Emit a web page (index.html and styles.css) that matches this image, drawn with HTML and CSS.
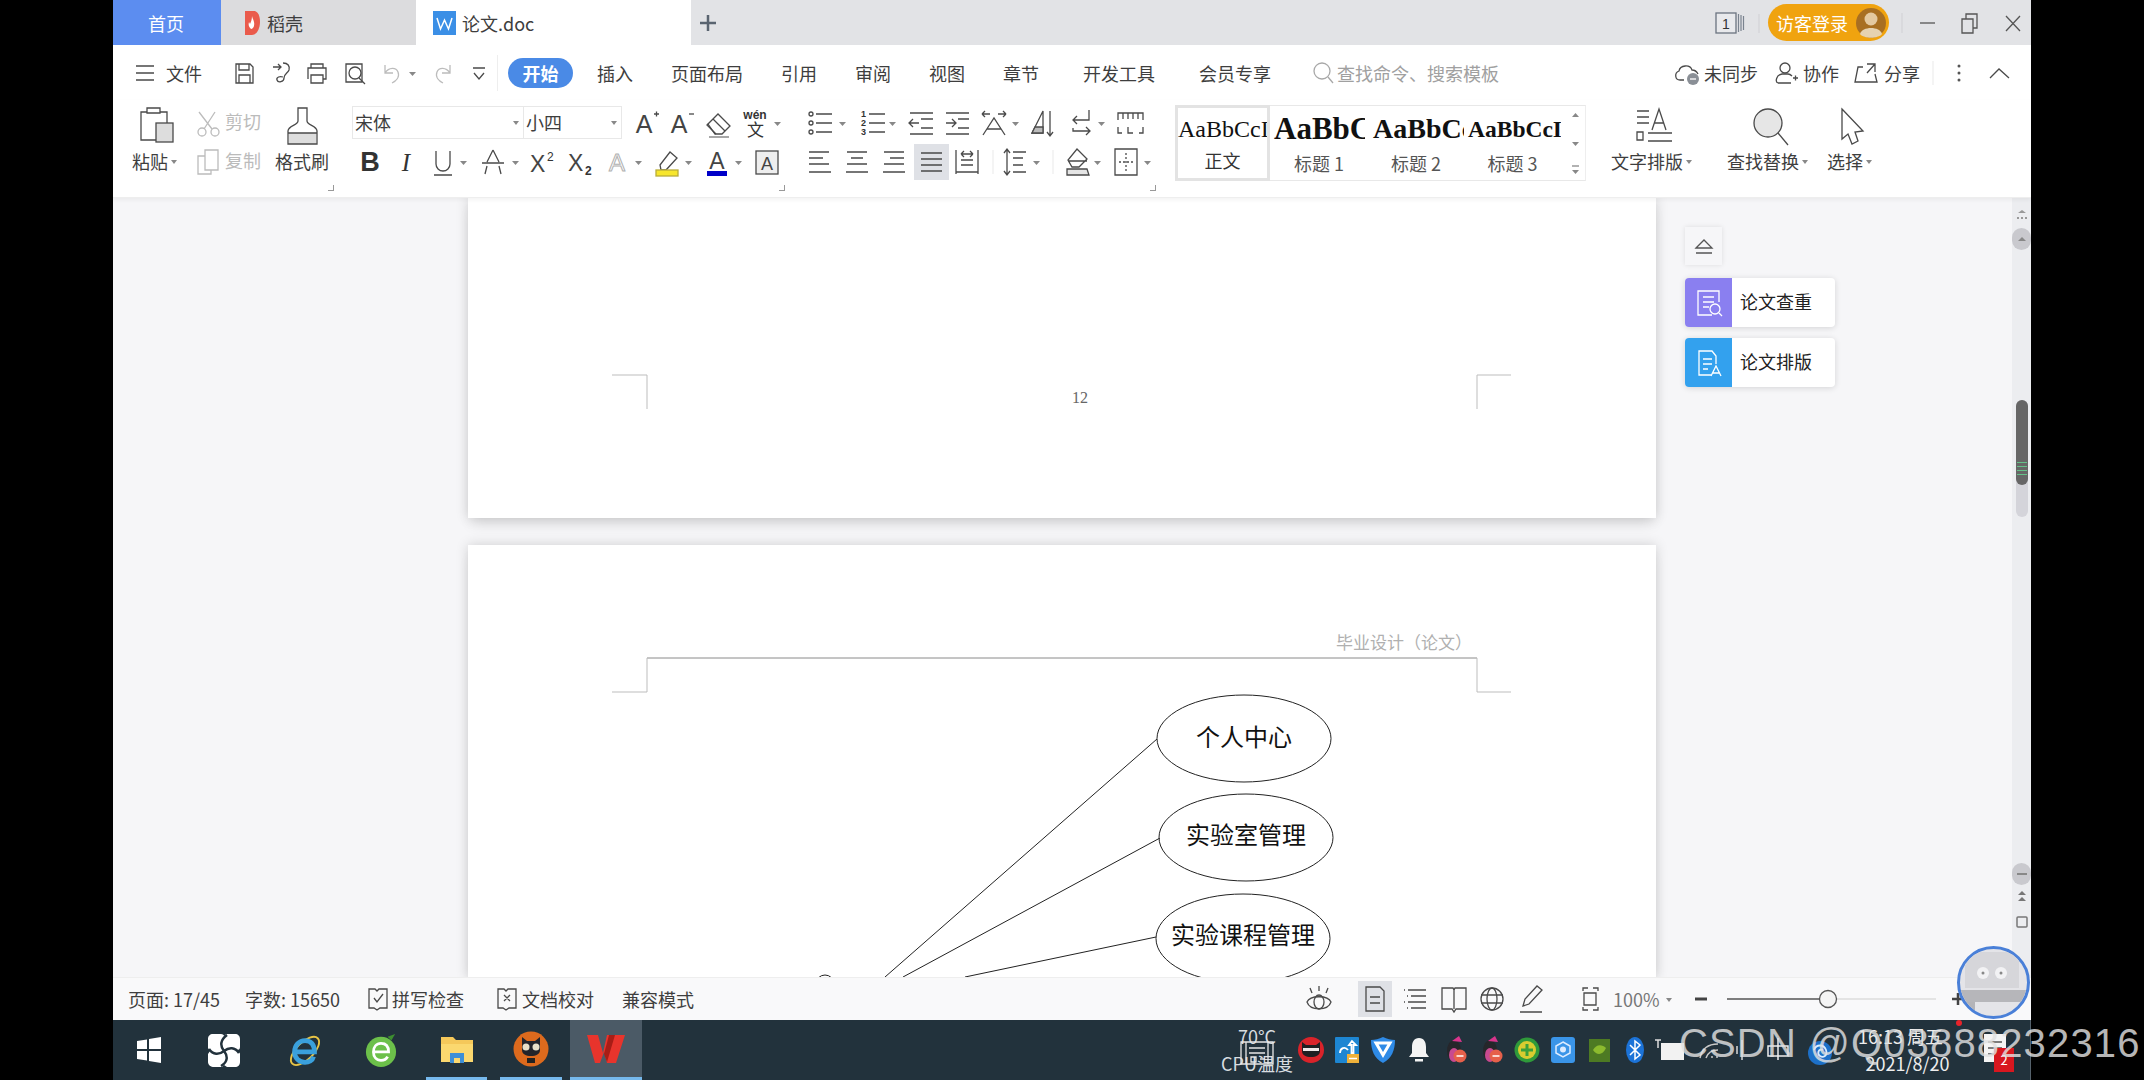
FILE: index.html
```html
<!DOCTYPE html>
<html lang="zh-CN">
<head>
<meta charset="utf-8">
<title>论文.doc</title>
<link rel="stylesheet" href="styles.css">
</head>
<body>
<div class="app">

  <header class="titlebar">
    <div class="tab tab-home">首页</div>
    <div class="tab tab-dk">
      <svg width="18" height="26" viewBox="0 0 18 26"><path d="M2 1h9c4 0 6 5 6 11s-3 13-8 13H2z" fill="#ea5b4c"/><path d="M9 6c1 4 3 6 2 10-1 3-3 3-3 3-2-2-3-4-2-7l1 2c1-2 2-5 2-8z" fill="#fff"/></svg>
      <span>稻壳</span>
    </div>
    <div class="tab tab-doc">
      <svg width="23" height="24" viewBox="0 0 23 24"><rect width="23" height="24" fill="#3b8fe6"/><path d="M4 7l3.500 11L11.500 9l4 9L19 7" fill="none" stroke="#fff" stroke-width="1.500"/></svg>
      <span>论文.doc</span>
    </div>
    <svg class="ic" width="34" height="34" viewBox="0 0 34 34"><path d="M17 9v16M9 17h16" stroke="#5a6470" stroke-width="2.500"/></svg>
    <div class="title-right">
      <svg class="ic" width="68" height="30" viewBox="0 0 68 30"><rect x="16" y="5" width="20" height="20" fill="#e8e9ec" stroke="#6a7380" stroke-width="1.300"/><text class="t" x="26" y="21" text-anchor="middle" font-size="14">1</text><path d="M38.500 6v18M41 7v16M43.500 8v14" stroke="#7a838f" stroke-width="1.200"/><path d="M59 6v19" stroke="#d4d5d9"/></svg>
      <div class="login">
        <span>访客登录</span>
        <svg width="32" height="32" viewBox="0 0 32 32"><circle cx="16" cy="16" r="15" fill="#a86f22"/><circle cx="16" cy="12" r="6.500" fill="#e4c9a0"/><path d="M5 27c2-8 20-8 22 0-4 5-18 5-22 0z" fill="#e6d2b0"/></svg>
      </div>
      <svg class="ic" width="59" height="30" viewBox="0 0 59 30"><path d="M13 5v20" stroke="#d4d5d9"/><path d="M31 15h15" stroke="#555"/></svg>
      <svg class="ic" width="42" height="30" viewBox="0 0 42 30"><path d="M14 11h11v14H14zM18 11V6h11v14h-4" stroke="#555"/></svg>
      <svg class="ic" width="38" height="30" viewBox="0 0 38 30"><path d="M16 8l14 15M30 8L16 23" stroke="#555"/></svg>
    </div>
  </header>

  <nav class="menubar">
    <svg class="ic" width="49" height="30" viewBox="0 0 49 30"><path d="M23 8h18M23 15h18M23 22h18"/></svg>
    <span class="menu-file">文件</span>
    <svg class="ic" width="44" height="30" viewBox="0 0 44 30"><path d="M18 6h14l3 3v16H18zM21 6v6h10V6M21 25v-8h11v8"/></svg>
    <svg class="ic" width="37" height="30" viewBox="0 0 37 30"><path d="M11 9h8M16 6l3 3-3 3M21 5c5 0 7 3 6 7-1 3-5 4-5 8 0 4-6 5-7 2s3-4 6-3"/></svg>
    <svg class="ic" width="37" height="30" viewBox="0 0 37 30"><path d="M12 10V6h12v4M9 21V10h18v11h-3M12 17h12v8H12z"/></svg>
    <svg class="ic" width="38" height="30" viewBox="0 0 38 30"><path d="M10 6h16v18H10z"/><circle cx="19" cy="15" r="6"/><path d="M23 20l6 6"/></svg>
    <svg class="ic ic-off" width="50" height="30" viewBox="0 0 50 30"><path d="M11 7v8h8M11 15c4-6 11-6 13-1s-2 9-6 11"/><path class="c" d="M35 14h7l-3.500 4z"/></svg>
    <svg class="ic ic-off" width="36" height="30" viewBox="0 0 36 30"><path d="M26 7v8h-8M26 15c-4-6-11-6-13-1s2 9 6 11"/></svg>
    <svg class="ic" width="37" height="30" viewBox="0 0 37 30"><path d="M13 10h12M14 15l5 6 5-6"/></svg>
    <span class="menu-sep"></span>
    <span class="pill">开始</span>
    <div class="tabs">
      <span>插入</span><span>页面布局</span><span>引用</span><span>审阅</span><span>视图</span><span>章节</span>
      <span class="tab-far">开发工具</span><span class="tab-far">会员专享</span>
    </div>
    <div class="search">
      <svg class="ic ic-soft" width="25" height="30" viewBox="0 0 25 30"><circle cx="10" cy="13" r="8"/><path d="M16 19l5 6"/></svg>
      <span>查找命令、搜索模板</span>
    </div>
    <div class="menu-right">
      <svg class="ic" width="32" height="30" viewBox="0 0 32 30"><path d="M12 22H8c-5 0-6-7-1-9 1-6 11-7 13-1 3 0 5 2 6 4"/><circle cx="21" cy="21" r="6" fill="#8a8f96" stroke="none"/><path d="M18 21h6" stroke="#fff"/></svg>
      <span class="mr-54">未同步</span>
      <svg class="ic" width="45" height="30" viewBox="0 0 45 30"><circle cx="27" cy="10" r="5"/><path d="M20 25c-3-1-2-8 4-9h6c2 0 3 1 4 2M20 25h13M35 20h5M37.500 17.500v5"/></svg>
      <span class="mr-36">协作</span>
      <svg class="ic" width="45" height="30" viewBox="0 0 45 30"><path d="M24 9h-5l-3 15h22l-2-8M28 6h8v8M36 6l-8 9"/></svg>
      <span class="mr-36">分享</span>
      <svg class="ic" width="58" height="30" viewBox="0 0 58 30"><path d="M13 3v24" stroke="#eee"/><circle cx="39" cy="8" r="1.500" fill="#555" stroke="none"/><circle cx="39" cy="15" r="1.500" fill="#555" stroke="none"/><circle cx="39" cy="22" r="1.500" fill="#555" stroke="none"/></svg>
      <svg class="ic" width="49" height="30" viewBox="0 0 49 30"><path d="M12 20l9-9 10 9"/></svg>
    </div>
  </nav>

  <section class="ribbon">
    <div class="group g-clip">
      <div class="bigbtn b-paste">
        <svg class="ic" width="64" height="40" viewBox="0 0 64 40"><path d="M9 6h26v28H9z"/><path d="M15 2h13v5H15z" fill="#fff"/><rect x="24" y="17" width="17" height="19" fill="#ddd"/></svg>
        <span class="label">粘贴<i class="car"></i></span>
      </div>
      <div class="clipcol">
        <div class="cliprow"><svg class="ic ic-off" width="29" height="36" viewBox="0 0 29 36"><path d="M3 7l13 17M19 7L8 24"/><circle cx="6" cy="27" r="4"/><circle cx="19" cy="27" r="4"/></svg><span>剪切</span></div>
        <div class="cliprow"><svg class="ic ic-off" width="29" height="36" viewBox="0 0 29 36"><path d="M9 6h13v20H9z"/><path d="M9 12H2v18h13v-4" /></svg><span>复制</span></div>
      </div>
      <div class="bigbtn b-brush">
        <svg class="ic" width="54" height="40" viewBox="0 0 54 40"><rect x="14" y="27" width="27" height="11" fill="#ddd" stroke="none"/><path d="M23 2h9v13c0 4 10 5 10 10v13H13V25c0-5 10-6 10-10zM13 27h29"/></svg>
        <span class="label">格式刷</span>
      </div>
      <i class="mark"></i>
    </div>

    <div class="group g-font">
      <div class="row">
        <div class="fontsel fs-name"><span>宋体</span><i class="car"></i></div>
        <div class="fontsel fs-size"><span>小四</span><i class="car"></i></div>
        <svg class="ic" width="40" height="36" viewBox="0 0 40 36"><text class="t thin" x="22" y="28" text-anchor="middle" font-size="25">A</text><path d="M32 9h5M34.500 6.500v5"/></svg>
        <svg class="ic" width="36" height="36" viewBox="0 0 36 36"><text class="t thin" x="17" y="28" text-anchor="middle" font-size="25">A</text><path d="M27 9h5"/></svg>
        <svg class="ic" width="44" height="36" viewBox="0 0 44 36"><path d="M10 19L20 9l12 12-8 8h-7z"/><path d="M10 19l-1 1 9 9M15 14l12 12" /><path d="M11 32h20" stroke="#777"/></svg>
        <svg class="ic" width="44" height="36" viewBox="0 0 44 36"><text class="t" x="13" y="14" text-anchor="middle" font-size="12" font-weight="700">wén</text><text class="t" x="13" y="31" text-anchor="middle" font-size="17">文</text><path class="c" d="M32 17h7l-3.500 4z"/></svg>
      </div>
      <div class="row">
        <svg class="ic" width="36" height="36" viewBox="0 0 36 36"><text class="t" x="18" y="27" text-anchor="middle" font-size="27" font-weight="700">B</text></svg>
        <svg class="ic" width="36" height="36" viewBox="0 0 36 36"><text class="t serif" x="18" y="27" text-anchor="middle" font-size="25" font-style="italic">I</text></svg>
        <svg class="ic" width="48" height="36" viewBox="0 0 48 36"><path d="M12 7v13a7 7 0 0 0 14 0V7M10 31h18"/><path class="c" d="M36 17h7l-3.500 4z"/></svg>
        <svg class="ic" width="54" height="36" viewBox="0 0 54 36"><path d="M21 6l-6 12M21 6l6 12M10 19h22M15 22l-2 8M27 22l2 8"/><path class="c" d="M40 17h7l-3.500 4z"/></svg>
        <svg class="ic" width="36" height="36" viewBox="0 0 36 36"><text class="t thin" x="4" y="28" font-size="23">X</text><text class="t" x="21" y="17" font-size="12">2</text></svg>
        <svg class="ic" width="36" height="36" viewBox="0 0 36 36"><text class="t thin" x="6" y="27" font-size="23">X</text><text class="t" x="23" y="31" font-size="12" font-weight="700">2</text></svg>
        <svg class="ic" width="52" height="36" viewBox="0 0 52 36"><text class="t ghost" x="19" y="27" text-anchor="middle" font-size="24">A</text><path class="c" d="M37 17h7l-3.500 4z"/></svg>
        <svg class="ic" width="50" height="36" viewBox="0 0 50 36"><path d="M10 21L20 8l7 6-11 12h-5z"/><rect x="6" y="26" width="22" height="6" fill="#f7e62d" stroke="#b9ad3a"/><path class="c" d="M35 17h7l-3.500 4z"/></svg>
        <svg class="ic" width="50" height="36" viewBox="0 0 50 36"><text class="t thin" x="17" y="25" text-anchor="middle" font-size="23">A</text><rect x="7" y="27" width="20" height="5" fill="#0000c8" stroke="none"/><path class="c" d="M35 17h7l-3.500 4z"/></svg>
        <svg class="ic" width="36" height="36" viewBox="0 0 36 36"><rect x="6" y="7" width="22" height="23" fill="#eee"/><text class="t thin" x="17" y="26" text-anchor="middle" font-size="18">A</text></svg>
      </div>
      <i class="mark"></i>
    </div>

    <div class="group g-para">
      <div class="row">
        <svg class="ic" width="58" height="36" viewBox="0 0 58 36"><circle cx="17" cy="9" r="2"/><circle cx="17" cy="18" r="2"/><circle cx="17" cy="27" r="2"/><path d="M22 9h16M22 18h16M22 27h16"/><path class="c" d="M45 17h7l-3.500 4z"/></svg>
        <svg class="ic" width="50" height="36" viewBox="0 0 50 36"><text class="t" x="9" y="12" font-size="9" font-weight="700">1</text><text class="t" x="9" y="21" font-size="9" font-weight="700">2</text><text class="t" x="9" y="30" font-size="9" font-weight="700">3</text><path d="M17 9h16M17 18h16M17 27h16"/><path class="c" d="M37 17h7l-3.500 4z"/></svg>
        <svg class="ic" width="38" height="36" viewBox="0 0 38 36"><path d="M8 8h23M19 14h12M19 23h12M8 29h23M17 18H7M11 14l-4 4 4 4"/></svg>
        <svg class="ic" width="36" height="36" viewBox="0 0 36 36"><path d="M6 8h23M18 14h11M18 23h11M6 29h23M6 18h10M12 14l4 4-4 4"/></svg>
        <svg class="ic" width="48" height="36" viewBox="0 0 48 36"><path d="M7 30l11-17 11 17M11 24h14M6 9h8M6 9l3-3M6 9l3 3M30 9h-8M30 9l-3-3M30 9l-3 3"/><path class="c" d="M36 17h7l-3.500 4z"/></svg>
        <svg class="ic" width="38" height="36" viewBox="0 0 38 36"><path d="M8 28L19 6v22z"/><path d="M11 22h8v6H8z" fill="#bbb"/><path d="M26 6v25M23 27l3 4 3-4"/></svg>
        <svg class="ic" width="48" height="36" viewBox="0 0 48 36"><path d="M27 5v10H11M15 11l-4 4 4 4M11 23v3h17M24 22l4 4-4 4"/><path class="c" d="M36 17h7l-3.500 4z"/></svg>
        <svg class="ic" width="42" height="36" viewBox="0 0 42 36"><path d="M8 15V8h25v7M13 8v6M18 8v6M23 8v6M28 8v6M8 22v6h4M33 22v6h-4M18 22v6h5"/></svg>
      </div>
      <div class="row">
        <svg class="ic" width="44" height="36" viewBox="0 0 44 36"><path d="M15 8h20M15 14h14M15 20h20M15 28h22"/></svg>
        <svg class="ic" width="38" height="36" viewBox="0 0 38 36"><path d="M9 8h20M13 14h12M9 20h20M8 28h22"/></svg>
        <svg class="ic" width="38" height="36" viewBox="0 0 38 36"><path d="M8 8h20M14 14h14M8 20h20M7 28h22"/></svg>
        <span class="on"><svg class="ic" width="35" height="36" viewBox="0 0 35 36"><path d="M7 9h21M7 15h21M7 21h21M7 27h21"/></svg></span>
        <svg class="ic" width="36" height="36" viewBox="0 0 36 36"><path d="M7 6v24M29 6v24M7 28h22M12 21h12M12 10h12M12 10l3-3M12 10l3 3M24 10l-3-3M24 10l-3 3M12 16h12"/></svg>
        <svg class="ic" width="16" height="36" viewBox="0 0 16 36"><path d="M8 6v24" stroke="#eee"/></svg>
        <svg class="ic" width="44" height="36" viewBox="0 0 44 36"><path d="M6 6v24M3 9l3-4 3 4M3 27l3 4 3-4M12 8h13M12 14h10M12 21h10M12 28h13"/><path class="c" d="M32 17h7l-3.500 4z"/></svg>
        <svg class="ic" width="16" height="36" viewBox="0 0 16 36"><path d="M8 6v24" stroke="#eee"/></svg>
        <svg class="ic" width="47" height="36" viewBox="0 0 47 36"><path d="M16 5l10 10-8 8H11l-4-7zM7 17h19"/><path d="M6 25h20l2 6H6z" fill="#e5e5e5"/><path class="c" d="M33 17h7l-3.500 4z"/></svg>
        <svg class="ic" width="48" height="36" viewBox="0 0 48 36"><path d="M7 5h22v26H7z"/><path d="M18 9v18M11 18h14" stroke-dasharray="2 2"/><path class="c" d="M36 17h7l-3.500 4z"/></svg>
      </div>
      <i class="mark"></i>
    </div>

    <div class="gallery">
      <div class="style sel"><div class="sample s0">AaBbCcI</div><div class="cap">正文</div></div>
      <div class="style st-1"><div class="sample s1">AaBbCc</div><div class="cap">标题 1</div></div>
      <div class="style st-2"><div class="sample s2">AaBbCc</div><div class="cap">标题 2</div></div>
      <div class="style st-3"><div class="sample s3">AaBbCcI</div><div class="cap">标题 3</div></div>
      <svg class="ic" width="24" height="74" viewBox="0 0 24 74"><path class="c" d="M11 11l3.500-4 3.500 4z"/><path class="c" d="M11 36h7l-3.500 4z"/><path class="c" d="M11 64h7l-3.500 4z"/><path d="M11 60h7" stroke="#888"/></svg>
    </div>

    <div class="bigbtn b-layout">
      <svg class="ic" width="80" height="40" viewBox="0 0 80 40"><path d="M26 5h12M26 11h12M26 17h12M41 24l7-21 7 21M43 17h10M32 26H26v8h6zM37 27h24M37 35h24" /></svg>
      <span class="label">文字排版<i class="car"></i></span>
    </div>
    <div class="bigbtn b-find">
      <svg class="ic" width="100" height="40" viewBox="0 0 100 40"><circle cx="41" cy="17" r="14" fill="#e6e6e6"/><path d="M51 27l10 12" /></svg>
      <span class="label">查找替换<i class="car"></i></span>
    </div>
    <div class="bigbtn b-select">
      <svg class="ic" width="60" height="40" viewBox="0 0 60 40"><path d="M15 3l21 22-8 1 3 9-6 3-4-10-6 5z"/></svg>
      <span class="label">选择<i class="car"></i></span>
    </div>
  </section>

  <main class="docpane">
    <div class="pages">
      <article class="page page-a">
        <svg class="sheet" width="1188" height="320" viewBox="0 0 1188 320">
          <path class="crop" d="M144 177h35v34M1043 177h-34v34"/>
          <text class="pno" x="612" y="205" text-anchor="middle">12</text>
        </svg>
      </article>
      <article class="page page-b">
        <svg class="sheet" width="1188" height="430" viewBox="0 0 1188 430">
          <text class="hdr" x="868" y="102">毕业设计（论文）</text>
          <path class="hline" d="M179 111h830"/>
          <path class="crop" d="M179 111v34h-35M1009 111v34h34"/>
          <g class="uml">
            <ellipse cx="776" cy="191.500" rx="87" ry="43.500"/>
            <ellipse cx="778" cy="290.500" rx="87" ry="43.500"/>
            <ellipse cx="775" cy="391.500" rx="87" ry="44.500"/>
            <path d="M689 192L417 430M692 291L435 430M688 390L497 430"/>
            <circle cx="357" cy="437" r="9"/>
          </g>
          <text class="ut" x="776" y="199" text-anchor="middle">个人中心</text>
          <text class="ut" x="778" y="297" text-anchor="middle">实验室管理</text>
          <text class="ut" x="775" y="397" text-anchor="middle">实验课程管理</text>
        </svg>
      </article>
    </div>

    <aside class="side">
      <div class="collapse"><svg class="ic" width="20" height="20" viewBox="0 0 20 20"><path d="M2 12l8-8 8 8zM2 17h16" stroke="#555"/></svg></div>
      <div class="card">
        <div class="card-ico c-purple"><svg width="28" height="30" viewBox="0 0 28 30" fill="none" stroke="#fff" stroke-width="1.300"><path d="M24 14V3H3v24h14M8 9h11M8 14h11M8 19h6"/><circle cx="20" cy="21" r="5"/><path d="M24 25l3 3"/></svg></div>
        <span>论文查重</span>
      </div>
      <div class="card">
        <div class="card-ico c-blue"><svg width="28" height="30" viewBox="0 0 28 30" fill="none" stroke="#fff" stroke-width="1.300"><path d="M16 27H4V3h13l4 5v8M8 11h9M8 16h9M8 21h5M16 28l5-10 5 10M18 25h6"/></svg></div>
        <span>论文排版</span>
      </div>
    </aside>

    <div class="vscroll">
      <svg class="sc-top" width="20" height="30" viewBox="0 0 20 30"><path d="M6 15l4-3 4 3zM5 19h2v2H5zM9 19h2v2H9zM13 19h2v2h-2z" fill="#999"/></svg>
      <div class="sc-btn"><i class="sc-up"></i></div>
      <div class="sc-track">
        <div class="sc-rail"><div class="sc-thumb"><i></i><i></i><i></i><i></i></div></div>
      </div>
      <div class="sc-btn sc-btn-low"><i class="sc-dash"></i></div>
      <svg class="sc-icons" width="20" height="72" viewBox="0 0 20 72"><path d="M6 10l4-4 4 4zM6 16l4-4 4 4z" fill="#777"/><rect x="5" y="32" width="10" height="10" rx="1" fill="none" stroke="#777" stroke-width="1.500"/></svg>
    </div>
  </main>

  <footer class="statusbar">
    <span class="st-page">页面: 17/45</span>
    <span class="st-words">字数: 15650</span>
    <svg class="ic" width="26" height="30" viewBox="0 0 26 30"><path d="M3 5h6l2 2 2-2h8v19h-7l-3 2-3-2H3zM8 14l3 4 6-8"/></svg>
    <span class="st-spell">拼写检查</span>
    <svg class="ic" width="27" height="30" viewBox="0 0 27 30"><path d="M3 5h6l2 2 2-2h8v19h-7l-3 2-3-2H3zM9 11l6 6M15 11l-6 6"/></svg>
    <span class="st-proof">文档校对</span>
    <span>兼容模式</span>
    <div class="st-right">
      <svg class="ic" width="56" height="36" viewBox="0 0 56 36"><path d="M5 21c3-7 21-7 24 0-3 9-21 9-24 0z"/><ellipse cx="17" cy="21" rx="5" ry="7"/><path d="M17 5v5M8 7l2 5M26 7l-2 5"/></svg>
      <span class="on"><svg class="ic" width="34" height="36" viewBox="0 0 34 36"><path d="M8 6h14l4 4v20H8zM12 16h10M12 22h10"/></svg></span>
      <svg class="ic" width="43" height="36" viewBox="0 0 43 36"><path d="M16 9h18M19 15h15M16 21h18M19 27h15M12 9h1M15 15h1M12 21h1M15 27h1"/></svg>
      <svg class="ic" width="37" height="36" viewBox="0 0 37 36"><path d="M7 7h11l1 2 1-2h11v21H21l-2 3-2-3H7zM19 9v19"/></svg>
      <svg class="ic" width="39" height="36" viewBox="0 0 39 36"><circle cx="20" cy="18" r="11"/><ellipse cx="20" cy="18" rx="5" ry="11"/><path d="M9 14h22M9 22h22"/></svg>
      <svg class="ic" width="40" height="36" viewBox="0 0 40 36"><path d="M12 25l2-7 12-13 5 4-13 14zM9 31h22"/></svg>
      <svg class="ic" width="59" height="36" viewBox="0 0 59 36"><path d="M32 10V7h5M42 7h5v3M32 26v3h5M42 29h5v-3M33 12h12v12H33z"/></svg>
      <span class="zoomval">100%<i class="car"></i></span>
      <svg class="ic" width="280" height="36" viewBox="0 0 280 36"><path d="M5 18h12" stroke="#444" stroke-width="3"/><path d="M37 18h101" stroke="#555"/><path d="M147 18h99" stroke="#ddd"/><circle cx="138" cy="18" r="8.500" fill="#f4f4f4" stroke="#555"/><path d="M262 18h12M268 12v12" stroke="#444" stroke-width="2.500"/></svg>
    </div>
  </footer>

  <div class="taskbar">
    <div class="tk t-win"><svg width="26" height="26" viewBox="0 0 26 26"><path d="M1 4l10-1.500V12H1zM13 2l12-2v12H13zM1 14h10v9.500L1 22zM13 14h12v12l-12-2z" fill="#fff"/></svg></div>
    <div class="tk t-shell"><svg width="32" height="33" viewBox="0 0 32 33"><path d="M5 0h8c2 0 3 1 3 2l0 1 1-2c1-1 2-1 3-1h7c3 0 5 2 5 5v8c0 2-1 3-3 3l2 2c1 1 1 2 1 3v7c0 3-2 5-5 5h-8l-3-2-2 2H6c-3 0-6-2-6-5v-8l2-3-2-3V5c0-3 2-5 5-5z" fill="#fff"/><path d="M16 17C12 12 12 6 19 1M16 17c5-4 11-4 15 2M16 17c4 5 4 11-3 15M16 17c-5 4-11 4-15-2" fill="none" stroke="#22323c" stroke-width="2.500"/></svg></div>
    <div class="tk t-ie"><svg width="36" height="36" viewBox="0 0 38 38"><ellipse cx="19" cy="20" rx="19" ry="9" transform="rotate(-45 19 20)" fill="none" stroke="#e8c445" stroke-width="2"/><path d="M8 21h21c0-8-4-12-10-12S8 14 8 21c0 7 5 11 11 11 4 0 8-2 9-6" fill="none" stroke="#3aa0dc" stroke-width="5"/></svg></div>
    <div class="tk t-360"><svg width="32" height="35" viewBox="0 0 34 37"><circle cx="17" cy="20" r="16" fill="#6cc04a"/><path d="M9 20h16c0-6-3-9-8-9s-8 4-8 9 3 9 8 9c3 0 6-2 7-4" fill="none" stroke="#fff" stroke-width="3"/><path d="M24 4l8-3-4 7z" fill="#3d8f30"/></svg></div>
    <div class="tk t-files run"><svg width="34" height="28" viewBox="0 0 34 28"><path d="M1 2h12l3 3h17v22H1z" fill="#f5c85a"/><rect x="1" y="9" width="32" height="18" fill="#fbd86f"/><rect x="10" y="18" width="14" height="10" fill="#3e8fd6"/><rect x="14" y="23" width="6" height="5" fill="#fbd86f"/></svg></div>
    <div class="tk t-cat run"><svg width="36" height="36" viewBox="0 0 36 36"><circle cx="18" cy="18" r="17.500" fill="#dd6a1d"/><path d="M9 6l5 4h8l5-4v13c0 4-4 6-9 6s-9-2-9-6z" fill="#23242a"/><circle cx="13" cy="16" r="3.500" fill="#e8e0c8"/><circle cx="23" cy="16" r="3.500" fill="#e8e0c8"/><path d="M14 27h8v5h-8z" fill="#222"/></svg></div>
    <div class="tk t-wps run"><svg width="38" height="30" viewBox="0 0 38 30"><path d="M0 1h11l5 18 4-18h18l-9 28h-9l-3-11-4 11H8z" fill="#e8342c"/><path d="M17 20l5-19h6l-8 27z" fill="#a81d16"/></svg></div>

    <div class="tray">
      <div class="cpu">
        <span>70°C</span><span>CPU温度</span>
        <svg class="cpu-doc" width="36" height="24" viewBox="0 0 36 24" fill="none" stroke="#e8e8e8" stroke-width="1.300"><path d="M2 1h32v22H2zM7 1v22M29 1v22M10 7h16M10 12h16M12 16h5v5h-5zM21 18h5"/></svg>
      </div>
      <svg class="ti" width="36" height="44" viewBox="0 0 36 44"><circle cx="18" cy="22" r="13" fill="#d9232a"/><path d="M9 14l4 3h10l4-3v9c0 4-4 6-9 6s-9-2-9-6z" fill="#1f1f22"/><rect x="10" y="20" width="16" height="3" fill="#f0e8e8"/></svg>
      <svg class="ti" width="36" height="44" viewBox="0 0 36 44"><rect x="6" y="9" width="24" height="26" rx="1" fill="#1d86d2"/><path d="M11 25c0-5 5-7 8-3M23 13l-3 4h2.500v8h2v-8H27z" fill="none" stroke="#fff" stroke-width="1.800"/><rect x="18" y="26" width="12" height="9" fill="#eeb13a"/><path d="M20 30.500h8" stroke="#fff" stroke-width="1.500"/></svg>
      <svg class="ti" width="36" height="44" viewBox="0 0 36 44"><path d="M18 9c4 2 8 3 12 3 0 10-3 18-12 23C9 30 6 22 6 12c4 0 8-1 12-3z" fill="#2e8ae6"/><path d="M11 15h14l-7 12z" fill="none" stroke="#fff" stroke-width="3"/></svg>
      <svg class="ti" width="36" height="44" viewBox="0 0 36 44"><path d="M18 10c5 0 7 4 7 9v6l3 4H8l3-4v-6c0-5 2-9 7-9z" fill="#f4f4f4"/><rect x="14" y="31" width="8" height="2.500" fill="#f4f4f4"/></svg>
      <svg class="ti" width="36" height="44" viewBox="0 0 36 44"><ellipse cx="17" cy="23" rx="7" ry="11" fill="#26262a"/><ellipse cx="17" cy="27" rx="5" ry="7" fill="#c84a90"/><path d="M15 13l7-5 3 6z" fill="#d9358c"/><circle cx="23" cy="28" r="6.500" fill="#e6604a"/><path d="M19.500 28h7" stroke="#fff" stroke-width="1.500"/></svg>
      <svg class="ti" width="36" height="44" viewBox="0 0 36 44"><ellipse cx="17" cy="23" rx="7" ry="11" fill="#26262a"/><ellipse cx="17" cy="27" rx="5" ry="7" fill="#c84a90"/><path d="M15 13l7-5 3 6z" fill="#d9358c"/><circle cx="23" cy="28" r="6.500" fill="#e6604a"/><path d="M19.500 28h7" stroke="#fff" stroke-width="1.500"/></svg>
      <svg class="ti" width="36" height="44" viewBox="0 0 36 44"><circle cx="18" cy="22" r="12.500" fill="#2f9a3a"/><circle cx="18" cy="22" r="9" fill="#d8cc30"/><path d="M18 16v12M12 22h12" stroke="#3aa03a" stroke-width="3"/></svg>
      <svg class="ti" width="36" height="44" viewBox="0 0 36 44"><rect x="6" y="9" width="24" height="26" rx="3" fill="#3a95e8"/><path d="M18 14l7 4v7l-7 4-7-4v-7z" fill="none" stroke="#dcecff" stroke-width="1.500"/><circle cx="18" cy="21.500" r="3" fill="#dcecff"/></svg>
      <svg class="ti" width="36" height="44" viewBox="0 0 36 44"><rect x="8" y="11" width="21" height="23" fill="#4d7a23"/><path d="M12 22c3-6 9-6 13-2-3 7-9 8-13 2z" fill="#8cbb2e"/></svg>
      <svg class="ti" width="36" height="44" viewBox="0 0 36 44"><ellipse cx="18" cy="22" rx="9" ry="13" fill="#1c73d8"/><path d="M13 17l10 10-5 4V13l5 4-10 10" fill="none" stroke="#fff" stroke-width="1.500"/></svg>
      <svg class="ti" width="39" height="44" viewBox="0 0 39 44"><rect x="8" y="15" width="23" height="17" fill="#f2f2f2"/><path d="M5 12v8M2 12h6" stroke="#ddd" stroke-width="1.500"/></svg>
      <svg class="ti" width="38" height="44" viewBox="0 0 38 44" fill="none" stroke="#c8c8c8" stroke-width="1.500"><path d="M8 30c2-10 8-14 18-14M14 30c2-6 6-8 12-8M20 30v-2M25 30v-2"/></svg>
      <svg class="ti" width="24" height="44" viewBox="0 0 24 44" fill="none" stroke="#d8d8d8" stroke-width="1.500"><path d="M12 12v20M7 18v8"/></svg>
      <svg class="ti" width="46" height="44" viewBox="0 0 46 44" fill="none" stroke="#eee" stroke-width="1.500"><path d="M14 18h20v10H14zM24 10v22"/></svg>
      <svg class="ti" width="40" height="44" viewBox="0 0 40 44"><circle cx="20" cy="25" r="12" fill="#1d70c8"/><path d="M14 22c2-6 10-6 12 0s-3 8-6 6-2-8 3-6" fill="none" stroke="#d8ecff" stroke-width="1.800"/></svg>
      <div class="clock"><span class="c-time">16:13 周五</span><span>2021/8/20</span><i class="c-dot"></i></div>
      <div class="notify">
        <svg width="24" height="36" viewBox="0 0 24 36"><path d="M1 2h22v28H1z" fill="#f4f4f4"/><path d="M5 10h14M5 16h14M5 22h10" stroke="#555" stroke-width="1.500"/></svg>
        <span class="badge">2</span>
      </div>
    </div>
  </div>
</div>

<div class="float-ball">
  <svg width="73" height="73" viewBox="0 0 73 73"><rect x="8" y="6" width="54" height="36" fill="#d6d6da"/><circle cx="26" cy="27" r="6" fill="#f2f2f4"/><circle cx="44" cy="27" r="6" fill="#f2f2f4"/><circle cx="26" cy="27" r="1.500" fill="#888"/><circle cx="44" cy="27" r="1.500" fill="#888"/><rect x="3" y="44" width="66" height="12" fill="#b6b6ba"/><rect x="6" y="56" width="12" height="10" fill="#b4b4b8"/></svg>
</div>
<div class="watermark">CSDN @Q03888232316</div>
</body>
</html>
```
FILE: styles.css
```css
html, body { margin: 0; padding: 0; }
body {
  width: 2144px;
  height: 1080px;
  overflow: hidden;
  background: #000;
  position: relative;
  font-family: "Noto Sans CJK SC", "Noto Sans", sans-serif;
  font-size: 18px;
  color: #3e3e3e;
  line-height: 24px;
}
svg { display: block; flex: none; }
i { font-style: normal; }
.app { margin-left: 113px; width: 1918px; height: 1080px; display: flex; flex-direction: column; background: #fff; }

/* shared icon styling */
.ic { fill: none; stroke: #4a4a4a; stroke-width: 1.300; }
.ic-off { stroke: #bcbcbc; }
.ic-soft { stroke: #a8a8a8; }
.ic text { stroke: none; }
.t { fill: #333; font-family: "Liberation Sans", sans-serif; }
.thin { font-weight: 400; fill: #444; }
.serif { font-family: "Liberation Serif", serif; }
.ghost { fill: #fff; stroke: #b0b0b0 !important; stroke-width: 1; }
.c { fill: #888; stroke: none; }
.car { display: inline-block; width: 0; height: 0; border: 3.500px solid transparent; border-top: 4px solid #888; border-bottom: 0; margin-left: 3px; vertical-align: 5px; }
.on { background: #dfe1e6; display: block; flex: none; height: 36px; }

/* title bar */
.titlebar { height: 45px; flex: none; display: flex; align-items: center; background: #e2e3e6; }
.tab { height: 45px; display: flex; align-items: center; flex: none; }
.tab-home { width: 108px; justify-content: center; background: #5c8df0; color: #fff; padding-right: 2px; box-sizing: border-box; }
.tab-dk { width: 195px; background: #dcdcde; padding-left: 22px; gap: 6px; box-sizing: border-box; }
.tab-doc { width: 275px; background: #fff; padding-left: 17px; gap: 6px; box-sizing: border-box; }
.title-right { margin-left: auto; padding-right: 3px; display: flex; align-items: center; }
.login { width: 121px; height: 37px; box-sizing: border-box; border-radius: 19px; background: #f0a30f; color: #fff; display: flex; align-items: center; justify-content: space-between; padding: 0 2px 0 8px; font-size: 18px; }
.login span { white-space: nowrap; }

/* menu row */
.menubar { height: 55px; flex: none; display: flex; align-items: center; background: #fff; }
.menu-file { width: 52px; padding-left: 4px; flex: none; }
.menu-sep { width: 1px; height: 36px; background: #eee; flex: none; }
.pill { width: 65px; height: 30px; margin: 0 24px 0 10px; border-radius: 15px; background: #4a8ae6; color: #fff; font-weight: 700; text-align: center; line-height: 30px; flex: none; }
.tabs { display: flex; gap: 38px; flex: none; white-space: nowrap; }
.tab-far { margin-left: 6px; }
.search { margin-left: 41px; display: flex; align-items: center; color: #a0a0a0; white-space: nowrap; }
.menu-right { margin-left: auto; padding-right: 4px; display: flex; align-items: center; white-space: nowrap; }
.mr-54 { width: 54px; }
.mr-36 { width: 36px; }

/* ribbon */
.ribbon { height: 98px; flex: none; display: flex; background: #fff; border-bottom: 1px solid #eee; box-sizing: border-box; box-shadow: 0 2px 4px rgba(0,0,0,.05); position: relative; z-index: 2; white-space: nowrap; }
.group { position: relative; flex: none; box-sizing: border-box; padding-top: 3px; }
.mark { position: absolute; width: 5px; height: 5px; border-right: 1px solid #999; border-bottom: 1px solid #999; bottom: 6px; right: 9px; }
.g-clip { width: 239px; display: flex; padding: 0 0 0 19px; }
.g-clip .mark { right: 18px; }
.g-font { width: 442px; padding-left: 0; }
.g-para { width: 378px; }
.g-para .mark { right: 16px; }
.row { display: flex; align-items: center; height: 39px; }
.bigbtn { flex: none; padding-top: 6px; }
.label { display: block; margin-top: 3px; }
.b-paste { width: 64px; }
.b-brush { width: 54px; }
.clipcol { width: 79px; flex: none; padding-top: 3px; }
.cliprow { height: 39px; display: flex; align-items: center; color: #bbb; }
.cliprow span { padding-bottom: 3px; }
.b-layout { width: 116px; margin-left: 25px; }
.b-find { width: 100px; }
.b-select { width: 60px; }

.fontsel { height: 33px; box-sizing: border-box; border: 1px solid #e8e8e8; background: #fff; display: flex; align-items: center; justify-content: space-between; padding: 0 4px 0 2px; flex: none; }
.fontsel span { padding-bottom: 2px; }
.fontsel .car { margin: 0; vertical-align: 0; }
.fs-name { width: 172px; }
.fs-size { width: 98px; border-left: 0; }

.gallery { margin: 5px 0 0 3px; width: 411px; height: 76px; flex: none; display: flex; box-sizing: border-box; border-top: 1px solid #e8e8e8; border-bottom: 1px solid #e8e8e8; border-right: 1px solid #eee; }
.style { flex: none; overflow: hidden; box-sizing: border-box; text-align: center; color: #555; }
.style.sel { width: 95px; border: 3px solid #e3e3e3; color: #333; margin-top: -1px; height: 76px; }
.st-1 { width: 98px; }
.st-2 { width: 96px; }
.st-3 { width: 97px; }
.sample { height: 45px; line-height: 46px; overflow: hidden; text-align: left; padding-left: 2px; color: #111; font-family: "Liberation Serif", serif; font-weight: 700; white-space: nowrap; }
.sel .sample { height: 40px; padding-left: 0; line-height: 42px; }
.s0 { font-size: 24px; font-weight: 400; }
.s1 { font-size: 31px; padding-left: 4px; width: 95px; box-sizing: border-box; }
.s2 { font-size: 28px; padding-left: 5px; }
.s3 { font-size: 23.500px; padding-left: 4px; }
.cap { line-height: 24px; }

/* document */
.docpane { height: 779px; flex: none; display: flex; overflow: hidden; background: #f6f6f8; }
.pages { padding-left: 355px; width: 1188px; flex: none; display: flex; flex-direction: column; gap: 27px; }
.page { background: #fff; flex: none; box-shadow: 0 0 12px rgba(0,0,0,.16), 0 10px 14px -4px rgba(0,0,0,.09); overflow: hidden; }
.page-a { height: 320px; }
.page-b { height: 432px; }
.page-b .sheet { margin-top: 2px; }
.crop { fill: none; stroke: #bdbdbd; stroke-width: 1; }
.pno { font-family: "Liberation Serif", serif; font-size: 16px; fill: #666; }
.hdr { font-size: 17px; fill: #b0b0b0; }
.hline { stroke: #8a8a8a; stroke-width: 1; }
.uml { fill: none; stroke: #222; stroke-width: 1; }
.ut { font-size: 24px; fill: #111; }

.side { margin-left: 29px; width: 327px; flex: none; padding-top: 29px; box-sizing: border-box; }
.collapse { width: 37px; height: 38px; background: #f6f6f8; box-shadow: 0 0 5px rgba(0,0,0,.1); display: flex; align-items: center; justify-content: center; margin-bottom: 13px; }
.card { width: 150px; height: 49px; background: #fff; border-radius: 4px; box-shadow: 0 1px 6px rgba(0,0,0,.14); display: flex; align-items: center; gap: 8px; margin-bottom: 11px; color: #222; }
.card span { padding-bottom: 3px; }
.card-ico { width: 47px; height: 49px; border-radius: 4px 0 0 4px; display: flex; align-items: center; justify-content: center; flex: none; }
.c-purple { background: #8a7ff0; }
.c-blue { background: #33a1ee; }

.vscroll { width: 19px; flex: none; background: #ecedf0; display: flex; flex-direction: column; align-items: center; }
.sc-top { height: 30px; }
.sc-btn { width: 19px; height: 22px; border-radius: 10px; background: #c9c9ce; display: flex; align-items: center; justify-content: center; flex: none; }
.sc-up { width: 0; height: 0; border: 4px solid transparent; border-bottom: 4px solid #888; border-top: 0; }
.sc-dash { width: 10px; height: 2px; background: #888; }
.sc-track { height: 613px; width: 19px; flex: none; padding-top: 150px; box-sizing: border-box; display: flex; flex-direction: column; align-items: center; }
.sc-rail { width: 12px; height: 117px; margin-left: 1px; border-radius: 6px; background: #d4d4da; flex: none; }
.sc-thumb { width: 12px; height: 85px; border-radius: 6px; background: #666; box-sizing: border-box; padding-top: 62px; display: flex; flex-direction: column; gap: 3px; align-items: center; }
.sc-thumb i { width: 10px; height: 1px; background: #64c088; flex: none; }

/* status bar */
.statusbar { height: 43px; flex: none; box-sizing: border-box; background: #f9f9fa; border-top: 1px solid #eee; display: flex; align-items: center; padding-left: 15px; white-space: nowrap; position: relative; }
.st-page { width: 117px; flex: none; }
.st-words { width: 121px; flex: none; }
.st-spell { width: 103px; flex: none; }
.st-proof { width: 100px; flex: none; }
.st-right { margin-left: auto; margin-right: 61px; display: flex; align-items: center; }
.zoomval { width: 80px; padding-left: 3px; box-sizing: border-box; color: #777; flex: none; }
.zoomval .car { margin-left: 6px; }

/* taskbar */
.taskbar { height: 60px; flex: none; background: #22323c; display: flex; color: #e8e8e8; }
.tk { display: flex; align-items: center; justify-content: center; height: 60px; box-sizing: border-box; flex: none; }
.run { border-bottom: 3px solid #76b9ed; }
.t-win { width: 72px; }
.t-shell { width: 78px; }
.t-ie { width: 84px; }
.t-360 { width: 68px; }
.t-files { width: 61px; margin-left: 11px; }
.t-cat { width: 62px; margin-left: 13px; }
.t-wps { width: 72px; margin-left: 8px; background: #4b5a66; }
.tray { margin-left: auto; display: flex; align-items: center; padding-right: 16px; border-right: 1px solid #55626c; box-sizing: content-box; height: 60px; white-space: nowrap; position: relative; }
.ti { flex: none; }
.cpu { width: 72px; flex: none; position: relative; display: flex; flex-direction: column; align-items: center; line-height: 27px; color: #d8dde0; }
.cpu-doc { position: absolute; left: 18px; top: 18px; }
.clock { width: 135px; flex: none; display: flex; flex-direction: column; align-items: center; position: relative; line-height: 27px; color: #eee; }
.c-time { margin-right: 14px; }
.c-dot { position: absolute; width: 6px; height: 6px; border-radius: 50%; background: #e8232a; left: 116px; top: -3px; }
.notify { width: 39px; height: 44px; flex: none; position: relative; display: flex; align-items: center; justify-content: center; }
.badge { position: absolute; right: 0; bottom: 0; width: 20px; height: 24px; background: #d8171f; color: #fff; font-size: 13px; line-height: 24px; text-align: center; }

/* overlays */
.float-ball { position: absolute; left: 1957px; top: 946px; width: 73px; height: 73px; box-sizing: border-box; border: 3px solid #4a80d8; border-radius: 50%; background: #e4e4e8; overflow: hidden; display: flex; align-items: center; justify-content: center; }
.float-ball svg { margin: -3px; }
.watermark { position: absolute; left: 1679px; top: 1020px; line-height: 46px; font-family: "Liberation Sans", sans-serif; font-size: 40px; letter-spacing: 1.150px; color: rgba(225,225,225,.82); white-space: nowrap; }
```
